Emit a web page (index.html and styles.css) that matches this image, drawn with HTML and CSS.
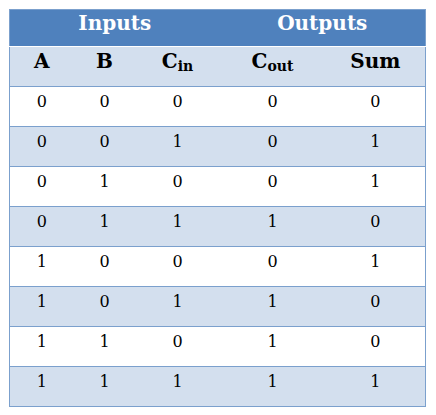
FILE: index.html
```html
<!DOCTYPE html>
<html>
<head>
<meta charset="utf-8">
<link rel="stylesheet" href="styles.css">
</head>
<body>
<table class="truth">
  <colgroup>
    <col class="c1"><col class="c2"><col class="c3"><col class="c4"><col class="c5">
  </colgroup>
  <thead>
    <tr class="title">
      <th colspan="3">Inputs</th>
      <th colspan="2">Outputs</th>
    </tr>
    <tr class="sub">
      <th>A</th><th>B</th><th>C<sub>in</sub></th><th>C<sub>out</sub></th><th>Sum</th>
    </tr>
  </thead>
  <tbody>
    <tr><td>0</td><td>0</td><td>0</td><td>0</td><td>0</td></tr>
    <tr class="alt"><td>0</td><td>0</td><td>1</td><td>0</td><td>1</td></tr>
    <tr><td>0</td><td>1</td><td>0</td><td>0</td><td>1</td></tr>
    <tr class="alt"><td>0</td><td>1</td><td>1</td><td>1</td><td>0</td></tr>
    <tr><td>1</td><td>0</td><td>0</td><td>0</td><td>1</td></tr>
    <tr class="alt"><td>1</td><td>0</td><td>1</td><td>1</td><td>0</td></tr>
    <tr><td>1</td><td>1</td><td>0</td><td>1</td><td>0</td></tr>
    <tr class="alt"><td>1</td><td>1</td><td>1</td><td>1</td><td>1</td></tr>
  </tbody>
</table>
</body>
</html>
```
FILE: styles.css
```css
html, body {
  margin: 0;
  padding: 0;
  background: #ffffff;
}
body {
  padding: 9px 0 0 9px;
  font-family: "DejaVu Serif", "Liberation Serif", serif;
}
.truth {
  border-collapse: collapse;
  table-layout: fixed;
  width: 416px;
  border: 1px solid #7ba0cd;
}
.c1 { width: 64px; }
.c2 { width: 62px; }
.c3 { width: 84px; }
.c4 { width: 106px; }
.c5 { width: 100px; }
.truth th, .truth td {
  padding: 0;
  text-align: center;
  vertical-align: top;
  border-top: 1px solid #7ba0cd;
}
.title th {
  background: #4f81bd;
  color: #ffffff;
  font-weight: bold;
  font-size: 20px;
  height: 37px;
  line-height: 24px;
  padding-top: 1px;
  box-sizing: border-box;
  border-top: none;
  border-bottom: 1px solid #ffffff;
}
.sub th {
  background: #d3dfee;
  color: #000000;
  font-weight: bold;
  font-size: 20px;
  height: 40px;
  line-height: 24px;
  padding-top: 2px;
  box-sizing: border-box;
}
.sub sub {
  font-size: 14px;
  vertical-align: -3px;
  line-height: 0;
}
.truth td {
  font-size: 16px;
  height: 40px;
  line-height: 18px;
  padding-top: 6px;
  box-sizing: border-box;
  color: #000000;
}
.alt td {
  background: #d3dfee;
}
```
